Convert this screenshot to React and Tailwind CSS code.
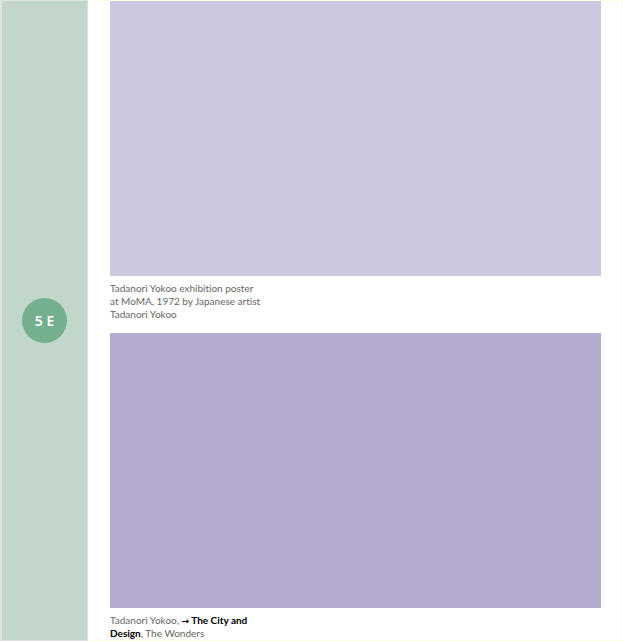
function Figure({ tone, label, children }) {
  return (
    <figure>
      <div role="img" aria-label={label} className={`h-[275px] ${tone}`} />
      <figcaption className="pt-1.5 text-[10px] leading-[13px] text-[#666666] [font-variant-ligatures:none]">
        {children}
      </figcaption>
    </figure>
  );
}

export default function App() {
  return (
    <div className="flex border-l-2 border-[#dfe2df] bg-[#ffffe6] font-['Lato',sans-serif]">
      <aside className="flex w-[86px] shrink-0 items-center justify-center border-t border-r border-b border-[#dce3de] bg-[#c3d6ca]">
        <div className="flex size-[45px] items-center justify-center rounded-full bg-[#74b08d] font-['Noto_Sans',sans-serif] text-sm font-semibold text-white">
          5 E
        </div>
      </aside>
      <main className="my-px flex min-w-0 grow flex-col gap-3 border-r border-[#f7f7f7] bg-white pr-[21px] pl-[22px]">
        <Figure tone="bg-[#cdc8df]" label="Tadanori Yokoo exhibition poster">
          Tadanori Yokoo exhibition poster
          <br />
          at MoMA, 1972 by Japanese artist
          <br />
          Tadanori Yokoo
        </Figure>
        <Figure tone="bg-[#b5abd0]" label="The Wonders">
          Tadanori Yokoo,{" "}
          <a href="#city-and-design" className="font-bold text-black">
            <span className="font-['DejaVu_Sans',sans-serif] text-[9px] leading-none">→</span>{" "}
            The City and
            <br />
            Design
          </a>
          , The Wonders
        </Figure>
      </main>
    </div>
  );
}
